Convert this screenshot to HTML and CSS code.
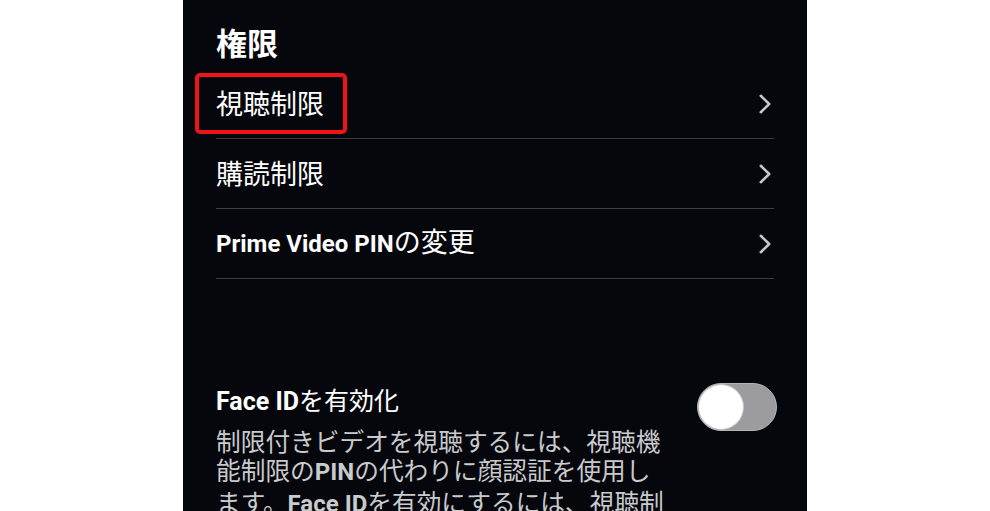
FILE: index.html
```html
<!DOCTYPE html>
<html lang="ja">
<head>
<meta charset="utf-8">
<title>権限</title>
<link rel="stylesheet" href="styles.css">
</head>
<body>
<main class="screen">
  <h2 class="section-title">権限</h2>
  <ul class="menu">
    <li class="menu-item">
      <span class="label">視聴制限</span>
      <svg class="chevron" viewBox="0 0 12 20" width="12" height="20"><polyline points="1.8,1.8 10.2,10 1.8,18.2" /></svg>
      <span class="highlight"></span>
    </li>
    <li class="menu-item">
      <span class="label">購読制限</span>
      <svg class="chevron" viewBox="0 0 12 20" width="12" height="20"><polyline points="1.8,1.8 10.2,10 1.8,18.2" /></svg>
    </li>
    <li class="menu-item">
      <span class="label"><span class="latin">Prime Video PIN</span>の変更</span>
      <svg class="chevron" viewBox="0 0 12 20" width="12" height="20"><polyline points="1.8,1.8 10.2,10 1.8,18.2" /></svg>
    </li>
  </ul>
  <section class="setting">
    <div class="setting-text">
      <div class="setting-title"><span class="latin">Face ID</span>を有効化</div>
      <p class="setting-desc">制限付きビデオを視聴するには、視聴機<br>能制限の<span class="latin">PIN</span>の代わりに顔認証を使用し<br>ます。<span class="latin">Face ID</span>を有効にするには、視聴制</p>
    </div>
    <div class="toggle"><span class="knob"></span></div>
  </section>
</main>
</body>
</html>
```

FILE: styles.css
```css
html, body {
  margin: 0;
  padding: 0;
  background: #ffffff;
  height: 100%;
  overflow: hidden;
}

body {
  display: flex;
  justify-content: center;
  font-family: "Noto Sans CJK JP", "Noto Sans", sans-serif;
}

.screen {
  width: 624px;
  height: 511px;
  box-sizing: border-box;
  background: #05070c;
  padding: 22px 33px 0;
  color: #ffffff;
  overflow: hidden;
}

.section-title {
  margin: 0 0 7px;
  font-size: 31px;
  font-weight: 700;
  line-height: 40px;
}

.latin {
  font-family: Roboto, "Noto Sans", sans-serif;
  font-weight: 700;
}

.menu {
  list-style: none;
  margin: 0;
  padding: 0;
}

.menu-item {
  position: relative;
  height: 69px;
  border-bottom: 1px solid #3a3d43;
  display: flex;
  align-items: center;
  justify-content: space-between;
}

.label {
  font-size: 27px;
  line-height: 36px;
  margin-top: -2px;
}

.label .latin {
  font-size: 24px;
}

.chevron {
  margin-right: 3px;
  fill: none;
  stroke: #c4c6c9;
  stroke-width: 2.6;
  stroke-linecap: round;
  stroke-linejoin: round;
}

.highlight {
  position: absolute;
  left: -21px;
  top: 4px;
  width: 152px;
  height: 61px;
  box-sizing: border-box;
  border: 4px solid #f01418;
  border-radius: 5px;
}

.setting {
  margin-top: 103px;
  display: flex;
  justify-content: space-between;
  align-items: flex-start;
}

.setting-title {
  font-size: 25px;
  line-height: 34px;
}

.setting-title .latin {
  font-size: 25px;
}

.setting-desc {
  margin: 7px 0 0;
  font-size: 24.7px;
  line-height: 29px;
  color: #c9cacc;
  white-space: nowrap;
}

.setting-desc .latin {
  font-size: 24px;
}

.toggle {
  width: 80px;
  height: 48px;
  margin-top: 1px;
  margin-right: -3px;
  box-sizing: border-box;
  border-radius: 24px;
  background: #9c9c9e;
  border: 1px solid #b5b5b7;
  padding: 1px;
  display: flex;
  align-items: center;
}

.knob {
  width: 44px;
  height: 44px;
  border-radius: 50%;
  background: #ffffff;
  box-shadow: 0 0 0 1px #c8c8c8;
}
```
